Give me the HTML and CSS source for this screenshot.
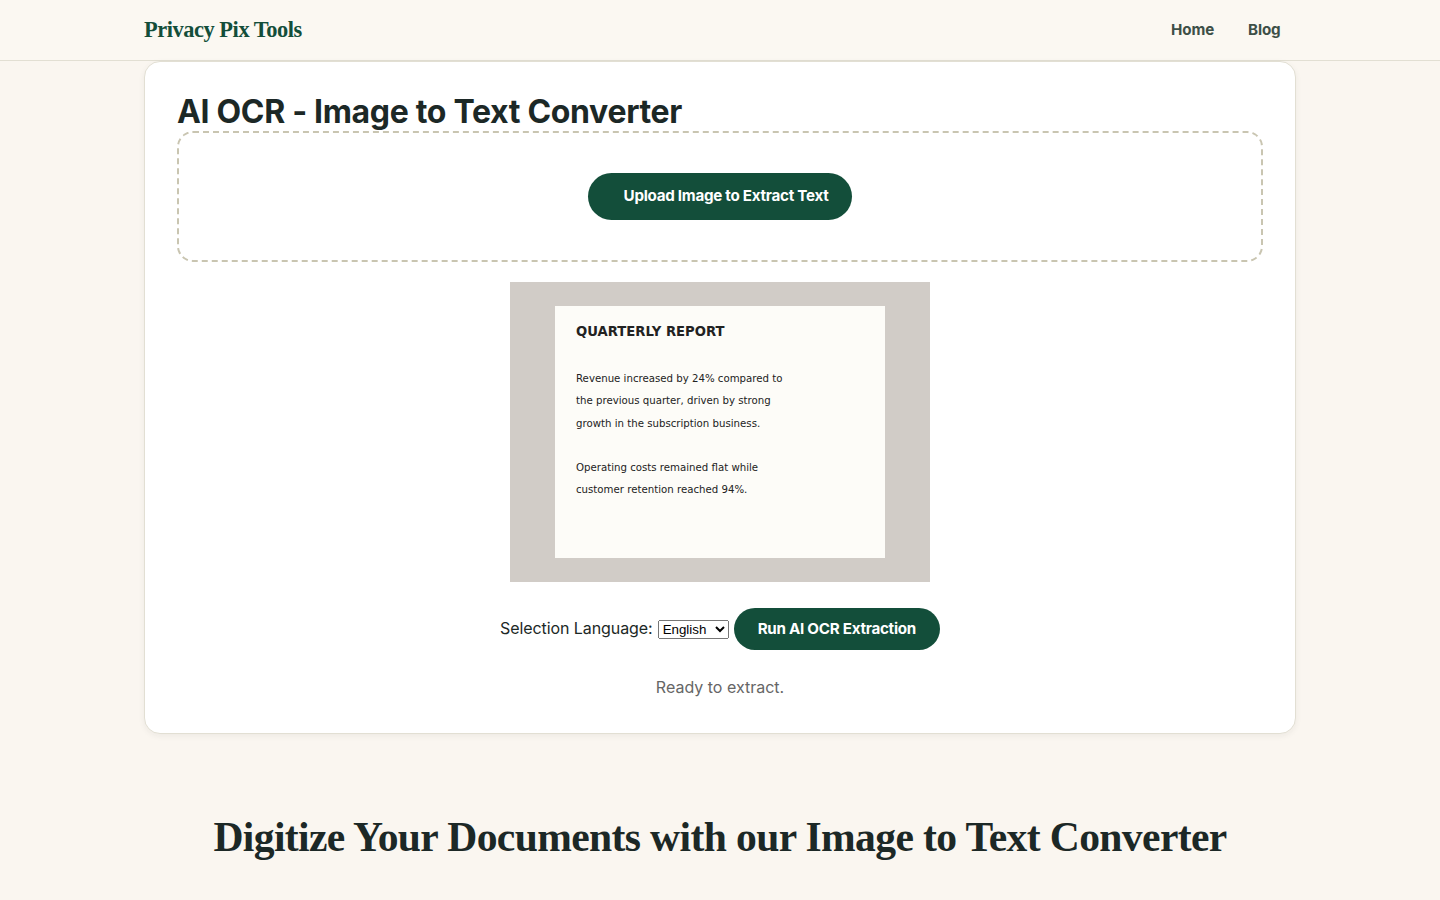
FILE: index.html
```html
<!DOCTYPE html>
<html lang="en">
<head>
    <meta charset="UTF-8">
    <meta name="viewport" content="width=device-width, initial-scale=1.0">
    <title>AI OCR - Privacy Pix Tools</title>
    <link rel="stylesheet" href="styles.css">
</head>
<body>
    <header class="site-header">
        <div class="container nav">
            <a href="#" class="logo">Privacy Pix Tools</a>
            <nav class="nav-links">
                <a href="#">Home</a>
                <a href="#">Blog</a>
            </nav>
        </div>
    </header>

    <main class="container">
        <section class="tool-card">
            <h1>AI OCR - Image to Text Converter</h1>

            <div class="drop-zone">
                <label class="btn upload-btn" for="upload">Upload Image to Extract Text</label>
                <input type="file" id="upload" accept="image/*" hidden>
            </div>

            <div class="preview">
                <svg width="420" height="300" viewBox="0 0 700 500">
                    <rect width="700" height="500" fill="#d1ccc7"/>
                    <rect x="75" y="40" width="550" height="420" fill="#fdfcf8"/>
                    <g class="doc-text">
                        <text class="doc-title" x="110" y="90">QUARTERLY REPORT</text>
                        <text x="110" y="167">Revenue increased by 24% compared to</text>
                        <text x="110" y="204">the previous quarter, driven by strong</text>
                        <text x="110" y="241">growth in the subscription business.</text>
                        <text x="110" y="315">Operating costs remained flat while</text>
                        <text x="110" y="352">customer retention reached 94%.</text>
                    </g>
                </svg>
            </div>

            <div class="controls">
                <label class="lang-label" for="lang">Selection Language:</label>
                <select id="lang">
                    <option>English</option>
                    <option>Spanish</option>
                    <option>French</option>
                </select>
                <button class="btn run-btn">Run AI OCR Extraction</button>
            </div>

            <p class="status">Ready to extract.</p>
        </section>

        <section class="content">
            <h2>Digitize Your Documents with our Image to Text Converter</h2>
        </section>
    </main>
</body>
</html>
```
FILE: styles.css
```css
* {
    margin: 0;
    padding: 0;
    box-sizing: border-box;
}

body {
    background: #faf6f0;
    color: #1c2826;
    font-family: 'Inter', sans-serif;
    font-size: 16px;
    line-height: 1.6;
    height: 100vh;
    overflow: hidden;
}

.container {
    width: 1152px;
    margin: 0 auto;
}

/* Header */
.site-header {
    background: #fbf8f2;
    border-bottom: 1px solid #e2dfd3;
}

.nav {
    display: flex;
    justify-content: space-between;
    align-items: center;
    height: 60px;
}

.logo {
    font-family: 'Liberation Serif', serif;
    font-size: 22.4px;
    font-weight: 700;
    letter-spacing: -0.02em;
    color: #134e3a;
    text-decoration: none;
}

.nav-links {
    display: flex;
    gap: 34px;
    padding-right: 15.5px;
}

.nav-links a {
    color: #3d4f47;
    font-size: 15.2px;
    font-weight: 700;
    letter-spacing: -0.01em;
    text-decoration: none;
}

/* Tool card */
.tool-card {
    background: #fff;
    border: 1px solid #e2dfd3;
    border-radius: 16px;
    padding: 32px;
    height: 673px;
    box-shadow: 0 2px 6px rgba(28, 40, 38, 0.06);
}

.tool-card h1 {
    margin-top: -1px;
    padding-bottom: 1px;
    font-size: 32px;
    font-weight: 700;
    line-height: 37px;
    letter-spacing: -0.01em;
}

.drop-zone {
    display: flex;
    justify-content: center;
    align-items: center;
    height: 131px;
    border: 2px dashed #c9c5b1;
    border-radius: 16px;
}

.btn {
    background: #134e3a;
    color: #fff;
    border: none;
    border-radius: 999px;
    font-family: inherit;
    font-size: 15.2px;
    font-weight: 700;
    letter-spacing: -0.28px;
    cursor: pointer;
}

.upload-btn {
    padding: 11px 24px 12px 36px;
}

.preview {
    margin-top: 20px;
    text-align: center;
}

.preview svg {
    display: block;
    margin: 0 auto;
}

.doc-text {
    font-family: 'DejaVu Sans', sans-serif;
    font-size: 17px;
    fill: #222;
}

.doc-title {
    font-size: 22px;
    font-weight: 700;
}

.controls {
    display: flex;
    justify-content: center;
    align-items: center;
    gap: 5px;
    margin-top: 26px;
}

.lang-label {
    letter-spacing: -0.08px;
}

.run-btn {
    height: 42px;
    padding: 0 24px 1px;
}

.status {
    margin-top: 25px;
    color: #666;
    text-align: center;
}

/* Content */
.content h2 {
    margin-top: 76px;
    font-family: 'Liberation Serif', serif;
    font-size: 41.6px;
    font-weight: 700;
    line-height: 54px;
    letter-spacing: -0.015em;
    text-align: center;
}
```
